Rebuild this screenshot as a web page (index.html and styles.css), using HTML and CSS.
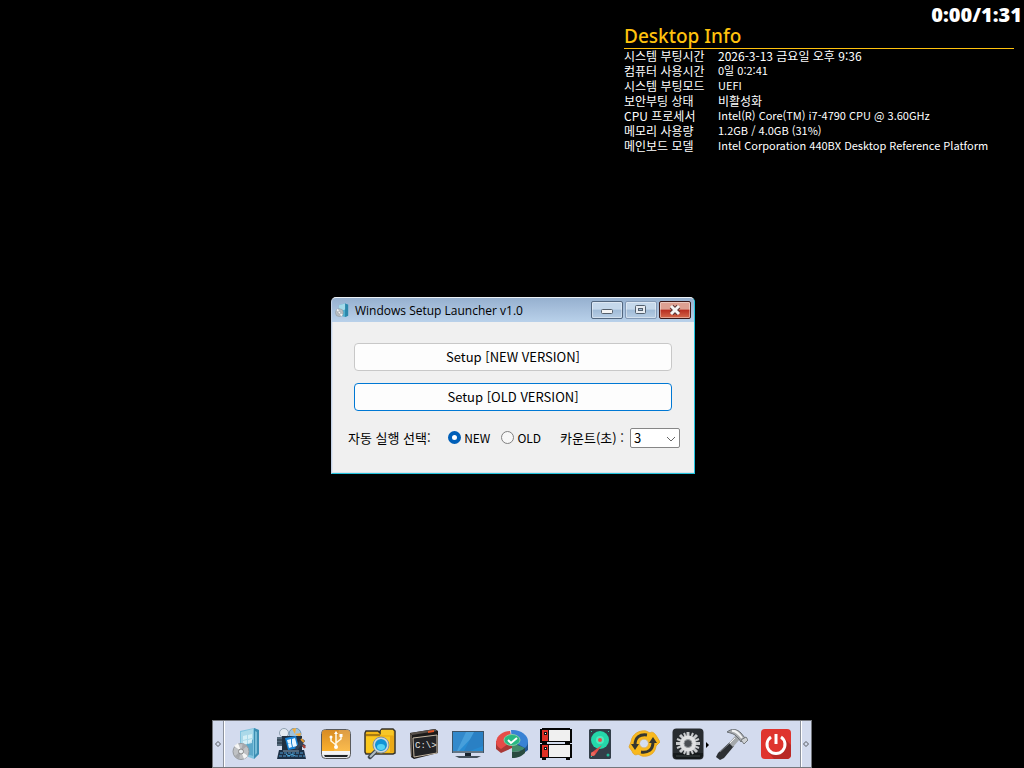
FILE: index.html
```html
<!DOCTYPE html>
<html lang="ko">
<head>
    <meta charset="UTF-8">
    <meta name="viewport" content="width=device-width, initial-scale=1.0">
    <title>Windows Setup Launcher</title>
    <link rel="stylesheet" href="styles.css">
</head>
<body>
    <div class="desktop">
        <div class="info">
            <div class="timer">0:00/1:31</div>
            <h1>Desktop Info</h1>
            <table>
                <tr><th scope="row">시스템 부팅시간</th><td class="korean">2026-3-13 금요일 오후 9:36</td></tr>
                <tr><th scope="row">컴퓨터 사용시간</th><td>0일 0:2:41</td></tr>
                <tr><th scope="row">시스템 부팅모드</th><td>UEFI</td></tr>
                <tr><th scope="row">보안부팅 상태</th><td class="korean">비활성화</td></tr>
                <tr><th scope="row">CPU 프로세서</th><td>Intel(R) Core(TM) i7-4790 CPU @ 3.60GHz</td></tr>
                <tr><th scope="row">메모리 사용량</th><td>1.2GB / 4.0GB (31%)</td></tr>
                <tr><th scope="row">메인보드 모델</th><td>Intel Corporation 440BX Desktop Reference Platform</td></tr>
            </table>
        </div>

        <div class="window">
            <div class="titlebar">
                <svg class="title-icon" viewBox="0 0 32 32">
                    <path d="M9 5l14-4 7 3v25l-7 3-14-4z" fill="#4fb0cf"/>
                    <path d="M23 1l7 3v25l-7 3z" fill="#2b87ab"/>
                    <path d="M9 5l14-4v14L9 20z" fill="#a5dbea"/>
                    <circle cx="10" cy="22" r="9" fill="#b9bec3" stroke="#7f8b94"/>
                    <path d="M10 22L3 16l4-3zM10 22l8 5-4 3z" fill="#f4f7f8"/>
                    <circle cx="10" cy="22" r="3" fill="#f3f3f3" stroke="#727c84"/>
                </svg>
                <span class="title">Windows Setup Launcher v1.0</span>
                <div class="controls">
                    <button class="control" aria-label="Minimize">
                        <svg viewBox="0 0 30 16"><rect x="9.500" y="7.500" width="11" height="4" rx="1" fill="#f4f4f4" stroke="#555f6b"/></svg>
                    </button>
                    <button class="control faded" aria-label="Maximize">
                        <svg viewBox="0 0 30 16"><rect x="9.500" y="3.500" width="10" height="8" rx="1" fill="#e6ebf1" stroke="#53606e"/><rect x="12.500" y="6.500" width="4" height="2" fill="#a6bdd6" stroke="#53606e"/></svg>
                    </button>
                    <button class="control close" aria-label="Close">
                        <svg viewBox="0 0 30 16"><path d="M11.500 4.500l7 7m0-7l-7 7" stroke="#5b3535" stroke-width="5"/><path d="M11 4l8 8m0-8l-8 8" stroke="#f5f5f5" stroke-width="3"/></svg>
                    </button>
                </div>
            </div>
            <form class="content">
                <div class="launch">
                    <button type="button">Setup [NEW VERSION]</button>
                    <button type="button" class="selected">Setup [OLD VERSION]</button>
                </div>
                <div class="options">
                    <span class="auto">자동 실행 선택:</span>
                    <label class="choice"><input type="radio" name="version" checked>NEW</label>
                    <label class="choice"><input type="radio" name="version">OLD</label>
                    <label class="count-label" for="count">카운트(초) :</label>
                    <div class="count">
                        <select id="count"><option>3</option><option>5</option><option>10</option></select>
                        <svg viewBox="0 0 10 6"><path d="M1 1l4 4 4-4" fill="none" stroke="#666"/></svg>
                    </div>
                </div>
            </form>
        </div>

        <div class="dock">
            <div class="grip"><svg viewBox="0 0 6 6"><path d="M3 .5L5.500 3 3 5.500.5 3z" fill="none" stroke="#55585f"/></svg></div>
            <div class="apps">
                <button aria-label="Windows Setup">
                    <svg viewBox="0 0 32 32">
                        <path d="M8 3l14-3 5 2v24l-5 5L8 26z" fill="#82c4df"/>
                        <path d="M9 4l12-3v27L9 25z" fill="#abd9e9"/>
                        <path d="M9 17c6 0 9-2 12-6v17L9 25z" fill="#5ca8c9"/>
                        <path d="M22 0l5 2v24l-5 5z" fill="#3d8eb3"/>
                        <path d="M23 3l2 1v21l-2 2z" fill="#79bdd6"/>
                        <path d="M11 8l4-1v4l-4 1zm5-1l4-1v4l-4 1zm-5 6l4-1v4l-4 1zm5-1l4-1v4l-4 1z" fill="#e3f5fa" opacity=".75"/>
                        <ellipse cx="9" cy="23.500" rx="8" ry="8" fill="#bfc1c4" stroke="#969a9e"/>
                        <path d="M9 23L2 18l4-3zM9 23l7 5-4 3z" fill="#f5f5f5"/>
                        <path d="M9 23l2-8 4 3zM9 23l-2 8-4-3z" fill="#a6a8ac"/>
                        <circle cx="9" cy="23.500" r="2.500" fill="#e9edf0" stroke="#888"/>
                    </svg>
                </button>
                <button aria-label="Windows tools">
                    <svg viewBox="0 0 32 32">
                        <circle cx="8" cy="5" r="4.500" fill="#e5eaf0" stroke="#8fa0b1"/>
                        <circle cx="19" cy="6" r="6" fill="#9fc3dc" stroke="#6c92ad"/>
                        <path d="M19 6l-3-5 4-1zM19 6l5 3 1-4z" fill="#f5ad3c"/>
                        <path d="M1 9h6v9H1z" fill="#53687a"/>
                        <path d="M1 12h6M1 15h6" stroke="#1e2c3a"/>
                        <path d="M6 8h20v14H6z" fill="#22303f"/>
                        <path d="M9 10l11-2 3 12-11 2z" fill="#1682d6"/>
                        <path d="M11 12l4-1v4l-3 .5zm5-1l3-1 1 4-4 1zm-4 5l3-1 1 4-3 1zm4-1l4-1 1 4-4 1z" fill="#e9f7ff"/>
                        <path d="M20 21l8-9M23 14l6 5" stroke="#374252" stroke-width="3"/>
                        <path d="M25 11l3 3" stroke="#e29b31" stroke-width="2"/>
                        <path d="M27 17l2 3" stroke="#b44439" stroke-width="2"/>
                        <path d="M3 22h25l2 9H1z" fill="#1c3046"/>
                        <path d="M4 25h24M3 28h26" stroke="#35658b" stroke-width="2" stroke-dasharray="3 1"/>
                        <path d="M10 26l3 2 3-2 3 2" fill="none" stroke="#4db0e5"/>
                        <path d="M7 23h16" stroke="#8ba1b2"/>
                    </svg>
                </button>
                <button aria-label="USB drive">
                    <svg viewBox="0 0 32 32">
                        <defs>
                            <linearGradient id="usb-face" x1="0" y1="0" x2="0" y2="1">
                                <stop offset="0" stop-color="#d78b24"/>
                                <stop offset="1" stop-color="#fbb02d"/>
                            </linearGradient>
                        </defs>
                        <rect x="1.500" y="1.500" width="29" height="29" rx="4" fill="#e6e8ea" stroke="#595a5c"/>
                        <path d="M5 2h22q3 0 3 3v18H2V5q0-3 3-3z" fill="url(#usb-face)"/>
                        <path d="M19 2h8q3 0 3 3v18H14z" fill="#fff" opacity=".15"/>
                        <path d="M2 23h28v3H2z" fill="#f5f5f5"/>
                        <path d="M4 27h24l-1 2H5z" fill="#202326"/>
                        <path d="M16 5v15M16 17l-5-4v-3M16 15l5-4V8" fill="none" stroke="#fff9e8" stroke-width="1.500"/>
                        <path d="M16 3l-2 3h4z" fill="#fff"/><circle cx="16" cy="19" r="2" fill="#fff"/><circle cx="11" cy="9" r="1.500" fill="#fff"/><path d="M19.500 6h3v3h-3z" fill="#fff"/>
                    </svg>
                </button>
                <button aria-label="File explorer">
                    <svg viewBox="0 0 32 32">
                        <path d="M1 5l1-2h12l2 2V3l2-2h11l2 2v22l-2 1H2l-1-2z" fill="#f3b716" stroke="#37352c" stroke-width="1.500"/>
                        <path d="M2 6h14v2H2z" fill="#a87b12"/>
                        <path d="M17 2h12v5H17z" fill="#f7c728"/>
                        <path d="M2 9h26v15H2z" fill="#fbc91d"/>
                        <path d="M26 8h4v16h-4z" fill="#eba916"/>
                        <path d="M6 29l6-6" stroke="#404850" stroke-width="4.500" stroke-linecap="round"/>
                        <path d="M6 29l6-6" stroke="#b0bdc5" stroke-width="2"/>
                        <circle cx="17" cy="17" r="7" fill="#1194d6" stroke="#cbd6dc" stroke-width="2"/>
                        <circle cx="17" cy="17" r="8" fill="none" stroke="#87939a"/>
                        <ellipse cx="17" cy="19" rx="4" ry="3" fill="#54d2f4"/>
                    </svg>
                </button>
                <button aria-label="Command prompt">
                    <svg viewBox="0 0 32 32">
                        <path d="M2 5l25-4 3 2v22L6 31l-3-2z" fill="#1c1a19"/>
                        <path d="M2 5l25-4 2 2L4 7z" fill="#57504a"/>
                        <path d="M20 3l6-1v2l-6 1z" fill="#e05326"/>
                        <path d="M2 6l2 1v22l-1-1z" fill="#5d554e"/>
                        <path d="M5 10l24-3v18L6 29z" fill="#222326" stroke="#c4b7a4"/>
                        <text x="7" y="20" class="prompt">C:\&gt;</text>
                    </svg>
                </button>
                <button aria-label="Display">
                    <svg viewBox="0 0 32 32">
                        <path d="M0 3h32v22H0z" fill="#3d5468"/>
                        <path d="M1 4h30v19H1z" fill="#278bd2"/>
                        <path d="M1 4h24L7 23H1z" fill="#479fdb"/>
                        <path d="M1 4h13L5 23H1z" fill="#3289cc"/>
                        <path d="M22 4h9v14L18 23h-6z" fill="#2a80c4"/>
                        <path d="M1 24h30" stroke="#8998a4"/>
                        <path d="M13 25h6v3h-6z" fill="#17222d"/>
                        <path d="M3 28h26l-4 2H7z" fill="#44515d"/>
                    </svg>
                </button>
                <button aria-label="Partition manager">
                    <svg viewBox="0 0 32 32">
                        <path d="M0 13v8l5 4 11-5v-6z" fill="#aa3937"/>
                        <path d="M17 13l15 1v8l-4 3-11-5z" fill="#23558f"/>
                        <path d="M0 14C1 7 7 3 14 3l2 10-11 8c-3-2-5-4-5-7z" fill="#e64c48"/>
                        <path d="M15 2c9-1 17 5 17 11 0 3-1 5-3 7l-13-7z" fill="#3982d4"/>
                        <path d="M16 15l13 5c-3 3-8 4-13 4z" fill="#438c6a"/>
                        <path d="M16 24c5 0 10-1 13-4v5c-3 3-7 5-13 5z" fill="#294b40"/>
                        <ellipse cx="16" cy="12" rx="8" ry="5.500" fill="#28b982" stroke="#85cba6"/>
                        <path d="M12 12l3 3 6-5" fill="none" stroke="#fff" stroke-width="2"/>
                    </svg>
                </button>
                <button aria-label="Disk volumes">
                    <svg viewBox="0 0 32 32">
                        <path d="M2 0h28v1h2v14h-2v1h2v14h-2v2h-4v-2H6v2H2v-2H0V16h2v-1H0V1h2z" fill="#050505"/>
                        <path d="M2 2h28v11H2zm0 15h28v12H2z" fill="#f0f0f0"/>
                        <path d="M2 2h6v11H2zm0 15h6v12H2z" fill="#df3025"/>
                        <path d="M8 2h1v11H8zm0 15h1v12H8z" fill="#111"/>
                        <path d="M4 4h3v3H4zm0 15h3v3H4z" fill="#111"/>
                        <path d="M5 5h1v1H5zm0 15h1v1H5z" fill="#fff"/>
                        <path d="M7 14h18v2H7z" fill="#d3dbee"/>
                    </svg>
                </button>
                <button aria-label="Hard disk">
                    <svg viewBox="0 0 32 32">
                        <path d="M6 1h20l1 1v28l-1 1H6l-1-1V2z" fill="#333e49"/>
                        <circle cx="16" cy="12" r="9" fill="#25d7aa"/>
                        <circle cx="16" cy="12" r="4" fill="#50e8bd"/>
                        <circle cx="16" cy="12" r="2" fill="#e94b48"/>
                        <path d="M18 17l-7 10-4 1v-3z" fill="#e54e48"/>
                        <path d="M7 3h1v1H7zm17 0h1v1h-1zM7 28h1v1H7z" fill="#32d4aa"/>
                        <circle cx="9" cy="26" r="2" fill="#e8695f"/>
                        <circle cx="24" cy="27" r="1.500" fill="#20ba99"/>
                    </svg>
                </button>
                <button aria-label="Restart">
                    <svg viewBox="0 0 32 32">
                        <path d="M3 14C4 6 11 2 18 3l4 2c2-2 5 0 7 4l3 5-4 4c-1 8-7 11-14 10l-4-2c-3 2-5 0-6-3l-3-4z" fill="#f9b91d" stroke="#e5a92c" stroke-linejoin="round"/>
                        <circle cx="16" cy="15.500" r="4.500" fill="#d4def1" stroke="#e0b04c"/>
                        <path d="M7 17c0-8 5-11 12-10" fill="none" stroke="#35362f" stroke-width="3"/>
                        <path d="M3 16h8l-4 6z" fill="#35362f"/>
                        <path d="M25 14c0 8-5 11-12 10" fill="none" stroke="#35362f" stroke-width="3"/>
                        <path d="M21 15h8l-4-6z" fill="#35362f"/>
                    </svg>
                </button>
                <button class="more" aria-label="Settings">
                    <svg viewBox="0 0 32 32">
                        <rect x=".5" y=".5" width="31" height="31" rx="4" fill="#282c30"/>
                        <path d="M1 25h30v3l-3 3H4l-3-3z" fill="#15191b"/>
                        <path d="M4 28h24" stroke="#3c4545"/>
                        <g stroke="#c8cacc" stroke-width="3"><path d="M16 4v23M4 15.500h24M8 7l17 17M25 7L8 24"/><path d="M12 5l9 21M21 5l-9 21M5 11l22 9M27 11L5 20" stroke-width="2"/></g>
                        <circle cx="16" cy="15.500" r="8" fill="#e0e1e2"/>
                        <circle cx="16" cy="15.500" r="4" fill="#4b4f53" stroke="#9a9da0"/>
                    </svg>
                </button>
                <button aria-label="Tools">
                    <svg viewBox="0 0 32 32">
                        <path d="M14 14l4 4L8 30l-4 2-4-3 2-4z" fill="#2c2f33"/>
                        <path d="M4 24l10-9" stroke="#777b80"/>
                        <path d="M20 7l4 4-7 8-4-4z" fill="#a4a8ab"/>
                        <path d="M19 10l-5 5" stroke="#eee"/>
                        <path d="M11 4C16 0 21 1 25 5l4 5-4 4-2-3-4-4c-3-2-5-2-8-3z" fill="#a7aaad" stroke="#696e73"/>
                        <path d="M16 3c4-1 7 3 10 7" fill="none" stroke="#f0f1f2" stroke-width="2"/>
                        <path d="M25 12l5-3 2 3-4 4z" fill="#cfd2d4" stroke="#777b7e"/>
                    </svg>
                </button>
                <button aria-label="Shut down">
                    <svg viewBox="0 0 32 32">
                        <rect x="1" y="1" width="30" height="30" rx="4" fill="#df342e"/>
                        <path d="M24 10l7 7v11l-3 3H14l-5-6z" fill="#b92926"/>
                        <circle cx="16" cy="16" r="10" fill="#df342e"/>
                        <path d="M11 9a9 9 0 1 0 10 0" fill="none" stroke="#fff" stroke-width="3"/>
                        <path d="M16 6v10" stroke="#fff" stroke-width="3"/>
                    </svg>
                </button>
            </div>
            <div class="grip"><svg viewBox="0 0 6 6"><path d="M3 .5L5.500 3 3 5.500.5 3z" fill="none" stroke="#55585f"/></svg></div>
        </div>
    </div>
</body>
</html>
```
FILE: styles.css
```css
* {
    box-sizing: border-box;
}
body {
    margin: 0;
    background: #000;
    font-family: "Noto Sans CJK KR", sans-serif;
}
button {
    padding: 0;
    border: 0;
    font-family: inherit;
}
svg {
    display: block;
}
.desktop {
    display: grid;
    min-height: 100vh;
}
.desktop > * {
    grid-area: 1 / 1;
}

.info {
    place-self: start end;
    width: 400px;
    padding-right: 10px;
    color: #fff;
}
.timer {
    height: 25px;
    margin-right: -8px;
    padding-top: 2px;
    text-align: right;
    font: 800 20px/26px "Open Sans", sans-serif;
}
.info h1 {
    margin: 0;
    border-bottom: 1px solid #ffc20e;
    color: #ffc20e;
    font: 500 19px/23px "Noto Sans", sans-serif;
}
.info table {
    margin-top: -1px;
    border-collapse: collapse;
    font-size: 11px;
    line-height: 15px;
}
.info th, .info td {
    padding: 0;
    text-align: left;
    font-weight: 400;
    white-space: nowrap;
}
.info th {
    width: 94px;
}
.info th, .info .korean {
    font-size: 12px;
}

.window {
    place-self: center;
    width: 364px;
    margin: 2px 0 0 2px;
    border: 1px solid #c4d2e6;
    border-top-color: #eef3f8;
    border-right-color: #22c4de;
    border-bottom-color: #22c4de;
    border-radius: 5px 5px 0 0;
    background: #f0f0f0;
    overflow: hidden;
}
.titlebar {
    display: flex;
    align-items: center;
    height: 24px;
    padding: 0 3px;
    background: linear-gradient(#96b0cf, #b9d1ea);
}
.title-icon {
    width: 14px;
    height: 14px;
}
.title {
    flex: 1;
    padding: 2px 0 0 6px;
    font: 12px "Open Sans", sans-serif;
}
.controls {
    display: flex;
    gap: 2px;
}
.control {
    width: 32px;
    height: 18px;
    border: 1px solid #53677f;
    border-radius: 2px;
    background: linear-gradient(#c5d8eb 45%, #a0bbd7 50%, #b7cde4);
    box-shadow: inset 0 0 0 1px rgba(255, 255, 255, 0.4);
}
.faded {
    border-color: #8399b5;
}
.close {
    border-color: #3c1818;
    background: linear-gradient(#dda092 45%, #b82d20 50%, #d4694b);
}
.content {
    padding: 21px 14px 24px 15px;
    border-left: 1px solid #e1e7f0;
    border-bottom: 1px solid #d9e0e8;
    font-size: 13px;
}
.launch {
    display: flex;
    flex-direction: column;
    gap: 12px;
    padding: 0 8px 0 6px;
}
.launch button {
    height: 28px;
    border: 1px solid #c8c8c8;
    border-radius: 4px;
    background: #fdfdfd;
    color: #000;
    font-size: 13px;
}
.launch .selected {
    border-color: #0078d4;
}
.options {
    display: flex;
    align-items: center;
    margin-top: 17px;
}
.auto {
    flex: 1;
}
.choice {
    display: flex;
    align-items: center;
    gap: 3px;
    margin-right: 11px;
    font-size: 12px;
}
.choice input {
    appearance: none;
    width: 13px;
    height: 13px;
    margin: 0;
    border: 1px solid #808080;
    border-radius: 50%;
    background: #f7f7f7;
}
.choice input:checked {
    border: 4px solid #005fb8;
    background: #fff;
}
.count-label {
    margin: 0 6px 0 8px;
}
.count {
    position: relative;
}
.count select {
    display: block;
    appearance: none;
    width: 50px;
    height: 20px;
    padding: 0 3px;
    border: 1px solid #868686;
    border-radius: 2px;
    background: #fff;
    color: #000;
    font: 13px/16px "Noto Sans CJK KR", sans-serif;
}
.count svg {
    position: absolute;
    right: 4px;
    bottom: 6px;
    width: 10px;
    height: 6px;
    pointer-events: none;
}

.dock {
    place-self: end center;
    display: flex;
    height: 48px;
    border: 1px solid #74777d;
    background: #d3dbee;
}
.grip {
    display: flex;
    align-items: center;
    justify-content: center;
    width: 10px;
}
.grip svg {
    width: 6px;
    height: 6px;
}
.apps {
    display: flex;
    align-items: center;
    gap: 12px;
    padding: 0 8px;
    border: solid #8b919d;
    border-width: 0 1px;
    box-shadow: inset 1px 0 #fff, 1px 0 #fff;
}
.apps button {
    width: 32px;
    height: 32px;
    background: none;
}
.more {
    position: relative;
}
.more::after {
    content: "";
    position: absolute;
    left: 34px;
    top: 14px;
    border: 3px solid transparent;
    border-left-color: #000;
    border-right-width: 0;
}
.prompt {
    fill: #e5e5e5;
    font: 9px "Liberation Mono", monospace;
}
```
